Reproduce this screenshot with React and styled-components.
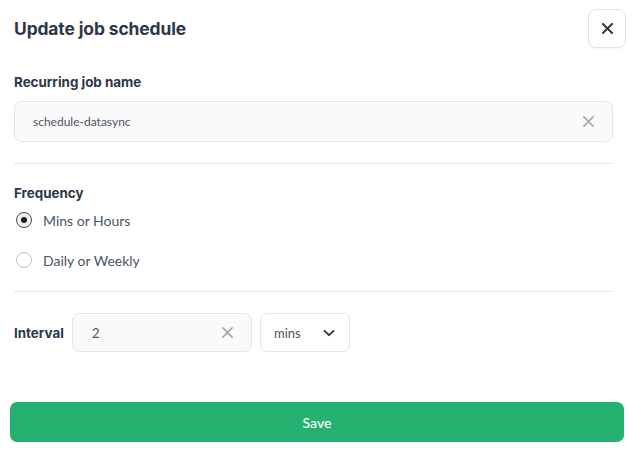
import React from "react";
import styled, { createGlobalStyle } from "styled-components";

const Global = createGlobalStyle`
  html, body { margin: 0; padding: 0; background: #fff; }
  body { font-family: Lato, "Noto Sans", sans-serif; }
  * { box-sizing: border-box; }
`;

const Page = styled.div`
  width: 632px;
  height: 449px;
  display: flex;
  flex-direction: column;
  padding: 0 8px 0 10px;
`;

const Header = styled.div`
  display: flex;
  align-items: center;
  justify-content: space-between;
  padding: 9px 0 0 4px;
  margin-right: -2px;
  height: 48px;
`;

const Title = styled.h1`
  margin: 0;
  font-family: Inter, sans-serif;
  font-size: 17.4px;
  font-weight: 700;
  color: #2d3748;
  letter-spacing: -0.1px;
`;

const CloseButton = styled.button`
  width: 38px;
  height: 39px;
  border: 1px solid #e4e2dd;
  border-radius: 8px;
  background: #fff;
  display: flex;
  align-items: center;
  justify-content: center;
  padding: 0;
  color: #2d3748;
  box-shadow: 0 1px 2px rgba(0,0,0,0.04);
`;

const Body = styled.div`
  padding: 0 11px 0 4px;
  display: flex;
  flex-direction: column;
`;

const Label = styled.div`
  font-family: Inter, sans-serif;
  font-size: 13.4px;
  font-weight: 700;
  color: #2d3748;
  line-height: 18px;
`;

const Field = styled.div`
  display: flex;
  align-items: center;
  justify-content: space-between;
  height: ${p => p.$h || 41}px;
  width: ${p => (p.$w ? p.$w + "px" : "100%")};
  border: 1px solid #e6e6e6;
  border-radius: 7px;
  background: ${p => (p.$white ? "#fff" : "#fafafa")};
  padding: 0 ${p => p.$pr || 18}px 0 ${p => p.$pl || 18}px;
  font-size: ${p => p.$fs || 12}px;
  color: #4a5568;
  flex-shrink: 0;
`;

const Divider = styled.hr`
  margin: 0;
  border: 0;
  border-top: 1px solid #e8e8e8;
  width: 100%;
`;

const RadioRow = styled.label`
  display: flex;
  align-items: center;
  gap: 11px;
  font-size: 14px;
  color: #4a5568;
  height: 20px;
  padding-left: 2px;
`;

const RadioCircle = styled.span`
  width: 16px;
  height: 16px;
  border-radius: 50%;
  border: 1px solid ${p => (p.$checked ? "#4a4a44" : "#c9c5bb")};
  background: ${p => (p.$checked ? "#f3f2ee" : "#fff")};
  display: flex;
  align-items: center;
  justify-content: center;
  &::after {
    content: "";
    width: 6px;
    height: 6px;
    border-radius: 50%;
    background: ${p => (p.$checked ? "#1a1a1a" : "transparent")};
  }
`;

const IntervalRow = styled.div`
  display: flex;
  align-items: center;
  gap: 8px;
  padding-top: 1px;
`;

const IntervalLabel = styled(Label)`
  width: 50px;
`;

const SaveButton = styled.button`
  margin-top: 50px;
  height: 40px;
  width: 614px;
  border: 0;
  border-radius: 7px;
  background: #25b170;
  color: #fff;
  font-family: inherit;
  font-size: 14px;
  font-weight: 500;
`;

const XIcon = ({ size = 12, color = "currentColor", w = 2 }) => (
  <svg width={size} height={size} viewBox="0 0 12 12" fill="none">
    <path d="M1 1L11 11M11 1L1 11" stroke={color} strokeWidth={w} strokeLinecap="round" />
  </svg>
);

const Chevron = () => (
  <svg width="12" height="8" viewBox="0 0 12 8" fill="none">
    <path d="M1.5 1.8L6 6.2L10.5 1.8" stroke="#2d3748" strokeWidth="1.8" strokeLinecap="round" strokeLinejoin="round" />
  </svg>
);

const Spacer = styled.div`
  height: ${p => p.$h}px;
  flex-shrink: 0;
`;

export default function App() {
  return (
    <>
      <Global />
      <Page>
        <Header>
          <Title>Update job schedule</Title>
          <CloseButton aria-label="Close">
            <XIcon size={11} color="#2d3748" w={2.2} />
          </CloseButton>
        </Header>
        <Body>
          <Spacer $h={25} />
          <Label>Recurring job name</Label>
          <Spacer $h={10} />
          <Field $pl={18}>
            <span>schedule-datasync</span>
            <XIcon size={11} color="#a0a8b6" w={1.8} />
          </Field>
          <Spacer $h={21} />
          <Divider />
          <Spacer $h={20} />
          <Label>Frequency</Label>
          <Spacer $h={8} />
          <RadioRow>
            <RadioCircle $checked />
            Mins or Hours
          </RadioRow>
          <Spacer $h={20} />
          <RadioRow>
            <RadioCircle />
            Daily or Weekly
          </RadioRow>
          <Spacer $h={21} />
          <Divider />
          <Spacer $h={20} />
          <IntervalRow>
            <IntervalLabel>Interval</IntervalLabel>
            <Field $w={180} $h={39} $fs={13} $pl={19} $pr={18}>
              <span>2</span>
              <XIcon size={11} color="#a0a8b6" w={1.8} />
            </Field>
            <Field $w={90} $h={39} $fs={13} $pl={13} $pr={14} $white>
              <span>mins</span>
              <Chevron />
            </Field>
          </IntervalRow>
        </Body>
        <SaveButton>Save</SaveButton>
      </Page>
    </>
  );
}
